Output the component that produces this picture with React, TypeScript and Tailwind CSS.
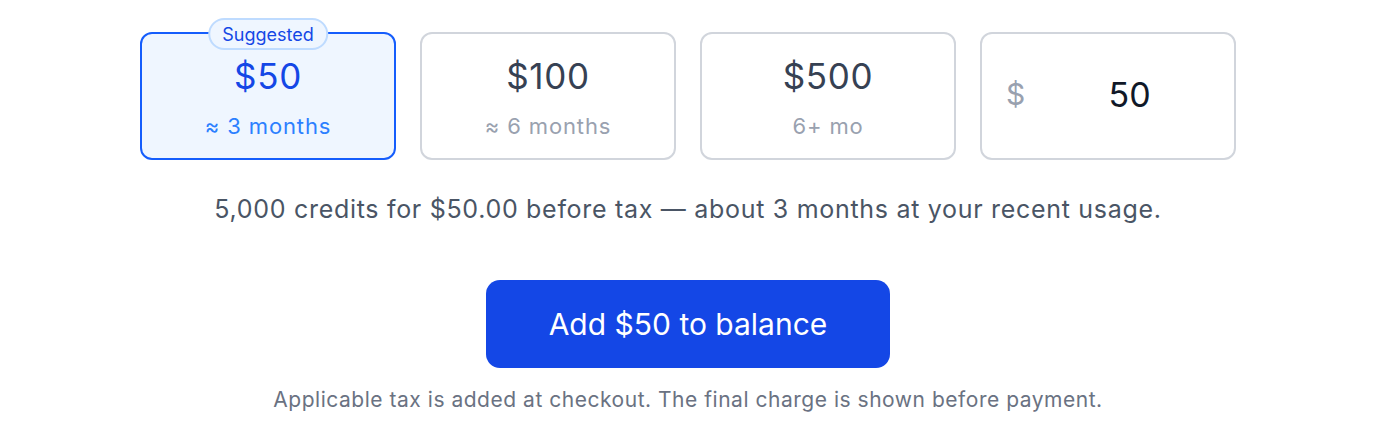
import React, { useState } from "react";

const options = [
  { amount: 50, label: "$50", sub: "≈ 3 months", suggested: true },
  { amount: 100, label: "$100", sub: "≈ 6 months" },
  { amount: 500, label: "$500", sub: "6+ mo" },
];

export default function App() {
  const [selected, setSelected] = useState(50);
  const [custom, setCustom] = useState("50");
  return (
    <div
      className="w-[1376px] h-[432px] bg-white flex flex-col items-center pt-8"
      style={{ fontFamily: "Inter, 'Noto Sans', sans-serif" }}
    >
      <div className="flex gap-6">
        {options.map((o) => {
          const active = selected === o.amount;
          return (
            <button
              key={o.amount}
              onClick={() => setSelected(o.amount)}
              className={
                "relative w-[256px] h-[128px] rounded-xl border-2 flex flex-col items-center pt-[22px] " +
                (active ? "border-blue-600 bg-blue-50" : "border-gray-300 bg-white")
              }
            >
              {o.suggested && (
                <span className="absolute left-1/2 -translate-x-1/2 top-[-16px] h-[32px] px-[12px] flex items-center rounded-full border-2 border-blue-200 bg-blue-50 text-[18px] text-blue-700">
                  Suggested
                </span>
              )}
              <span
                className={
                  "text-[35px] leading-[40px] tracking-[0.02em] " +
                  (active ? "text-blue-700" : "text-gray-700")
                }
              >
                {o.label}
              </span>
              <span
                className={
                  "mt-4 text-[22px] leading-[28px] tracking-[0.04em] " +
                  (active ? "text-blue-500" : "text-gray-400")
                }
              >
                {o.sub}
              </span>
            </button>
          );
        })}
        <div className="w-[256px] h-[128px] rounded-xl border-2 border-gray-300 bg-white flex items-center pl-6 pr-2 gap-2 pb-[3px]">
          <span className="text-[30px] text-gray-400">$</span>
          <input
            value={custom}
            onChange={(e) => setCustom(e.target.value)}
            className="flex-1 min-w-0 text-center text-[34px] text-gray-900 outline-none bg-transparent"
          />
        </div>
      </div>
      <p className="mt-[33px] text-[25px] leading-[32px] tracking-[0.028em] text-gray-600">
        5,000 credits for $50.00 before tax — about 3 months at your recent usage.
      </p>
      <button className="mt-[55px] w-[404px] h-[88px] rounded-[14px] bg-blue-700 text-white text-[30px]">
        Add $50 to balance
      </button>
      <p className="mt-[18px] text-[21px] leading-[28px] tracking-[0.025em] text-gray-500">
        Applicable tax is added at checkout. The final charge is shown before payment.
      </p>
    </div>
  );
}
